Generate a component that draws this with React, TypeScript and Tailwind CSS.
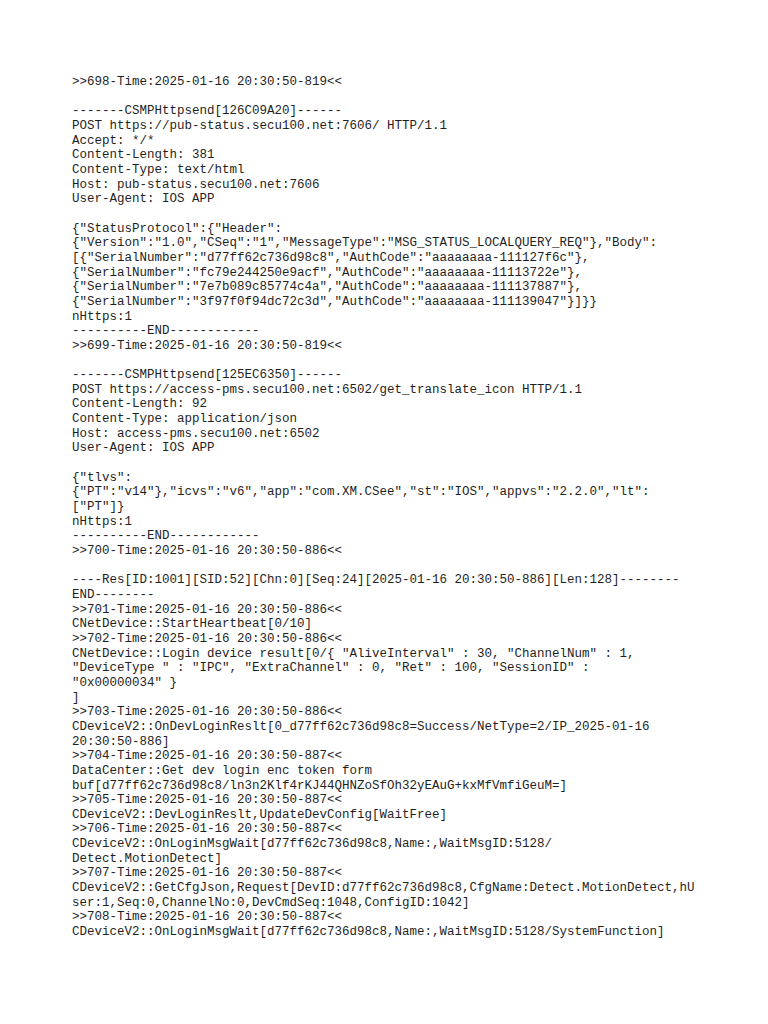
const lines: string[] = [
  ">>698-Time:2025-01-16 20:30:50-819<<",
  "",
  "-------CSMPHttpsend[126C09A20]------",
  "POST https://pub-status.secu100.net:7606/ HTTP/1.1",
  "Accept: */*",
  "Content-Length: 381",
  "Content-Type: text/html",
  "Host: pub-status.secu100.net:7606",
  "User-Agent: IOS APP",
  "",
  '{"StatusProtocol":{"Header":',
  '{"Version":"1.0","CSeq":"1","MessageType":"MSG_STATUS_LOCALQUERY_REQ"},"Body":',
  '[{"SerialNumber":"d77ff62c736d98c8","AuthCode":"aaaaaaaa-111127f6c"},',
  '{"SerialNumber":"fc79e244250e9acf","AuthCode":"aaaaaaaa-11113722e"},',
  '{"SerialNumber":"7e7b089c85774c4a","AuthCode":"aaaaaaaa-111137887"},',
  '{"SerialNumber":"3f97f0f94dc72c3d","AuthCode":"aaaaaaaa-111139047"}]}}',
  "nHttps:1",
  "----------END------------",
  ">>699-Time:2025-01-16 20:30:50-819<<",
  "",
  "-------CSMPHttpsend[125EC6350]------",
  "POST https://access-pms.secu100.net:6502/get_translate_icon HTTP/1.1",
  "Content-Length: 92",
  "Content-Type: application/json",
  "Host: access-pms.secu100.net:6502",
  "User-Agent: IOS APP",
  "",
  '{"tlvs":',
  '{"PT":"v14"},"icvs":"v6","app":"com.XM.CSee","st":"IOS","appvs":"2.2.0","lt":',
  '["PT"]}',
  "nHttps:1",
  "----------END------------",
  ">>700-Time:2025-01-16 20:30:50-886<<",
  "",
  "----Res[ID:1001][SID:52][Chn:0][Seq:24][2025-01-16 20:30:50-886][Len:128]--------",
  "END--------",
  ">>701-Time:2025-01-16 20:30:50-886<<",
  "CNetDevice::StartHeartbeat[0/10]",
  ">>702-Time:2025-01-16 20:30:50-886<<",
  'CNetDevice::Login device result[0/{ "AliveInterval" : 30, "ChannelNum" : 1,',
  '"DeviceType " : "IPC", "ExtraChannel" : 0, "Ret" : 100, "SessionID" :',
  '"0x00000034" }',
  "]",
  ">>703-Time:2025-01-16 20:30:50-886<<",
  "CDeviceV2::OnDevLoginReslt[0_d77ff62c736d98c8=Success/NetType=2/IP_2025-01-16",
  "20:30:50-886]",
  ">>704-Time:2025-01-16 20:30:50-887<<",
  "DataCenter::Get dev login enc token form",
  "buf[d77ff62c736d98c8/ln3n2Klf4rKJ44QHNZoSfOh32yEAuG+kxMfVmfiGeuM=]",
  ">>705-Time:2025-01-16 20:30:50-887<<",
  "CDeviceV2::DevLoginReslt,UpdateDevConfig[WaitFree]",
  ">>706-Time:2025-01-16 20:30:50-887<<",
  "CDeviceV2::OnLoginMsgWait[d77ff62c736d98c8,Name:,WaitMsgID:5128/",
  "Detect.MotionDetect]",
  ">>707-Time:2025-01-16 20:30:50-887<<",
  "CDeviceV2::GetCfgJson,Request[DevID:d77ff62c736d98c8,CfgName:Detect.MotionDetect,hU",
  "ser:1,Seq:0,ChannelNo:0,DevCmdSeq:1048,ConfigID:1042]",
  ">>708-Time:2025-01-16 20:30:50-887<<",
  "CDeviceV2::OnLoginMsgWait[d77ff62c736d98c8,Name:,WaitMsgID:5128/SystemFunction]",
];

const App = () => {
  return (
    <main className="w-[768px] h-[1024px] bg-white overflow-hidden">
      <div className="pl-[72px] pt-[75px] font-['Liberation_Mono',monospace] text-[12.5px] leading-[14.67px] text-[#1f1f1f]">
        {lines.map((line, index) => (
          <div key={index} className="whitespace-pre h-[14.67px]">
            {line}
          </div>
        ))}
      </div>
    </main>
  );
};

export default App;
